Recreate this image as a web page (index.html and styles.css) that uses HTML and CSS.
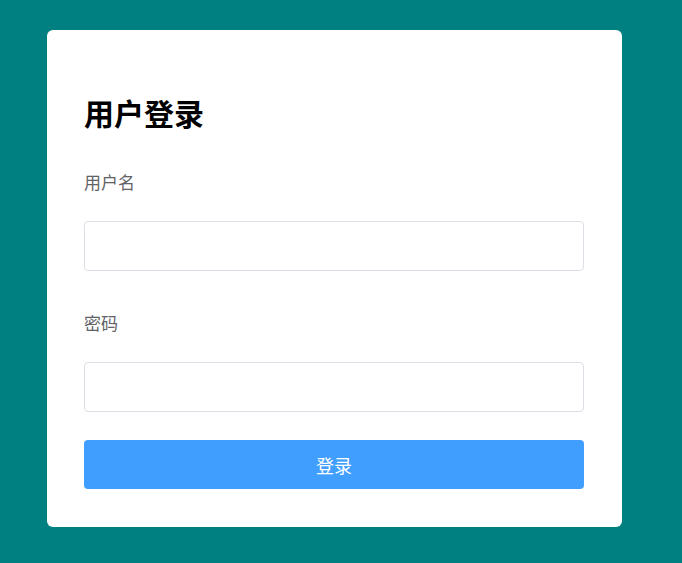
FILE: index.html
```html
<!DOCTYPE html>
<html lang="zh">
<head>
<meta charset="utf-8">
<title>用户登录</title>
<link rel="stylesheet" href="styles.css">
</head>
<body>
<div class="card">
  <h1 class="title">用户登录</h1>
  <label class="label" for="u">用户名</label>
  <input class="input" id="u" type="text">
  <label class="label label-pw" for="p">密码</label>
  <input class="input" id="p" type="password">
  <button class="btn" type="button">登录</button>
</div>
</body>
</html>
```
FILE: styles.css
```css
html, body {
  margin: 0;
  padding: 0;
  background: #008080;
  height: 100%;
}
body {
  padding: 30px 0 0 47px;
  box-sizing: border-box;
  font-family: "Liberation Sans", "Noto Sans CJK SC", sans-serif;
}
.card {
  width: 575px;
  box-sizing: border-box;
  background: #fff;
  border-radius: 6px;
  padding: 37px 38px 38px 37px;
  display: flex;
  flex-direction: column;
}
.title {
  margin: 28px 0 0;
  font-size: 30px;
  line-height: 40px;
  font-weight: bold;
  color: #000;
}
.label {
  margin-top: 37px;
  font-size: 17px;
  line-height: 24px;
  color: #606266;
}
.label-pw {
  margin-top: 42px;
}
.input {
  margin-top: 25px;
  height: 50px;
  box-sizing: border-box;
  border: 1px solid #dcdfe6;
  border-radius: 4px;
  padding: 0 15px;
  font-size: 16px;
  outline: none;
}
.btn {
  margin-top: 28px;
  height: 49px;
  border: none;
  border-radius: 4px;
  background: #409eff;
  color: #fff;
  font-family: inherit;
  font-size: 18px;
  cursor: pointer;
}
```
